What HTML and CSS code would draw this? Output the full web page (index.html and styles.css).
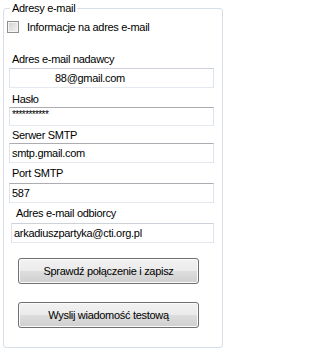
FILE: index.html
```html
<!DOCTYPE html>
<html lang="pl">
<head>
<meta charset="utf-8">
<link rel="stylesheet" href="styles.css">
</head>
<body>
<fieldset class="group">
  <legend class="group-title">Adresy e-mail</legend>
  <label class="check-row">
    <span class="checkbox"></span>
    <span class="check-text">Informacje na adres e-mail</span>
  </label>

  <div class="label r1">Adres e-mail nadawcy</div>
  <div class="field soft f1"><span class="indent">88@gmail.com</span></div>

  <div class="label r2">Hasło</div>
  <div class="field f2"><span class="pw">***********</span></div>

  <div class="label r3">Serwer SMTP</div>
  <div class="field f3">smtp.gmail.com</div>

  <div class="label r4">Port SMTP</div>
  <div class="field f4">587</div>

  <div class="label r5 shifted">Adres e-mail odbiorcy</div>
  <div class="field soft f5">arkadiuszpartyka@cti.org.pl</div>

  <div class="actions">
    <button class="btn">Sprawdź połączenie i zapisz</button>
    <button class="btn">Wyslij wiadomość testową</button>
  </div>
</fieldset>
</body>
</html>
```
FILE: styles.css
```css
html, body {
  margin: 0;
  padding: 0;
  background: #ffffff;
}
body {
  width: 228px;
  height: 351px;
  font-family: "Liberation Sans", Arial, sans-serif;
  font-size: 11px;
  letter-spacing: -0.3px;
  color: #000000;
}
.group {
  margin: 1px 5px 0 3px;
  padding: 0 0 19px 0;
  border: 1px solid #d5dfe5;
  border-radius: 3px;
  min-width: 0;
}
.group-title {
  margin-left: 6px;
  padding: 0 2px;
  line-height: 14px;
  height: 14px;
}
.check-row {
  display: flex;
  align-items: center;
  height: 14px;
  margin-top: 5px;
  margin-left: 3px;
}
.checkbox {
  width: 12px;
  height: 12px;
  box-sizing: border-box;
  border: 1px solid #8e8f8f;
  background: linear-gradient(135deg, #d2d2d2 0%, #e6e6e6 60%, #f4f4f4 100%);
  box-shadow: inset 0 0 0 1px #f6f6f6;
  flex: none;
}
.check-text {
  margin-left: 8px;
  line-height: 14px;
}
.label {
  line-height: 14px;
  height: 14px;
  margin-left: 8px;
  white-space: nowrap;
}
.label.shifted {
  margin-left: 12px;
}
.r1 { margin-top: 18px; }
.r2 { margin-top: 4px; }
.r3 { margin-top: 2px; }
.r4 { margin-top: 3px; }
.r5 { margin-top: 3px; }
.field {
  box-sizing: border-box;
  height: 20px;
  width: 205px;
  margin-left: 5px;
  border: 1px solid #e2e3ea;
  border-top-color: #abadb3;
  border-bottom-color: #e3e9ef;
  padding-left: 2px;
  line-height: 18px;
  white-space: nowrap;
  overflow: hidden;
}
.field.soft {
  border-top-color: #cdd1d8;
}
.f1 { margin-top: 2px; }
.f2 { margin-top: 1px; height: 19px; }
.f3 { margin-top: 1px; }
.f4 { margin-top: 3px; }
.f5 { margin-top: 3px; margin-left: 7px; width: 203px; }
.indent {
  padding-left: 43px;
}
.pw {
  letter-spacing: -0.6px;
  font-size: 10px;
  line-height: 12px;
  display: inline-block;
  vertical-align: top;
  margin-top: 1px;
}
.actions {
  display: flex;
  flex-direction: column;
  gap: 18px;
  margin-top: 15px;
  margin-left: 14px;
}
.btn {
  box-sizing: border-box;
  width: 181px;
  height: 26px;
  padding: 0;
  border: 1px solid #707070;
  border-radius: 3px;
  background: linear-gradient(#f2f2f2 0%, #ebebeb 48%, #dddddd 52%, #cfcfcf 100%);
  box-shadow: inset 0 0 0 1px #fbfbfb;
  font-family: "Liberation Sans", Arial, sans-serif;
  font-size: 11px;
  letter-spacing: -0.3px;
  color: #000000;
  text-align: center;
}
```
